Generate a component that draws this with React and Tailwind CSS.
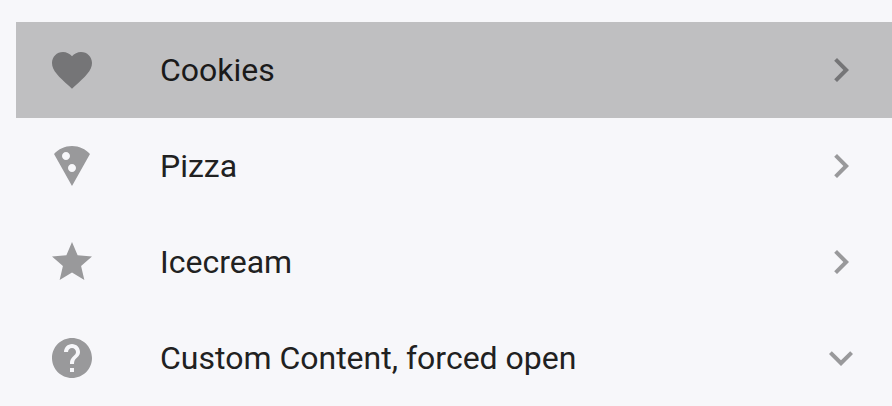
const icons = {
  heart: "M12 21.35l-1.45-1.32C5.4 15.36 2 12.28 2 8.5 2 5.42 4.42 3 7.5 3c1.74 0 3.41.81 4.5 2.09C13.09 3.81 14.76 3 16.5 3 19.58 3 22 5.42 22 8.5c0 3.78-3.4 6.86-8.55 11.54L12 21.35z",
  pizza: "M12 2C8.43 2 5.23 3.54 3.01 6L12 22l8.99-16C18.78 3.55 15.57 2 12 2zM7 7c0-1.1.9-2 2-2s2 .9 2 2-.9 2-2 2-2-.9-2-2zm5 8c-1.1 0-2-.9-2-2s.9-2 2-2 2 .9 2 2-.89 2-2 2z",
  star: "M12 17.27L18.18 21l-1.64-7.03L22 9.24l-7.19-.61L12 2 9.19 8.63 2 9.24l5.46 4.73L5.82 21z",
  help: "M12 2C6.48 2 2 6.48 2 12s4.48 10 10 10 10-4.48 10-10S17.52 2 12 2zm1 17h-2v-2h2v2zm2.07-7.75l-.9.92C13.45 12.9 13 13.5 13 15h-2v-.5c0-1.1.45-2.1 1.17-2.83l1.24-1.26c.37-.36.59-.86.59-1.41 0-1.1-.9-2-2-2s-2 .9-2 2H8c0-2.21 1.79-4 4-4s4 1.79 4 4c0 .88-.36 1.68-.93 2.25z",
  right: "M10 6L8.59 7.41 13.17 12l-4.58 4.59L10 18l6-6z",
  down: "M16.59 8.59L12 13.17 7.41 8.59 6 10l6 6 6-6z",
};

const items = [
  { label: "Cookies", icon: "heart", active: true },
  { label: "Pizza", icon: "pizza" },
  { label: "Icecream", icon: "star" },
  { label: "Custom Content, forced open", icon: "help", open: true },
];

function Icon({ name }) {
  return (
    <svg viewBox="0 0 24 24" className="size-12 shrink-0" fill="currentColor" aria-hidden="true">
      <path d={icons[name]} />
    </svg>
  );
}

function Item({ label, icon, active, open }) {
  return (
    <li>
      <button
        type="button"
        aria-expanded={Boolean(open)}
        className={`flex h-24 w-full items-center pr-[27px] pl-8 text-left ${active ? "bg-[#bfbfc1] text-[#757577]" : "text-[#99999b]"}`}
      >
        <Icon name={icon} />
        <span className={`ml-16 flex-1 text-[32px] leading-12 ${active ? "text-[#1a1a1a]" : "text-[#212121]"}`}>
          {label}
        </span>
        <Icon name={open ? "down" : "right"} />
      </button>
    </li>
  );
}

export default function App() {
  return (
    <main className="min-h-screen bg-[#f7f7fa] pt-[22px] pl-4 font-[Roboto,sans-serif]">
      <ul>
        {items.map((item) => (
          <Item key={item.label} {...item} />
        ))}
      </ul>
    </main>
  );
}
